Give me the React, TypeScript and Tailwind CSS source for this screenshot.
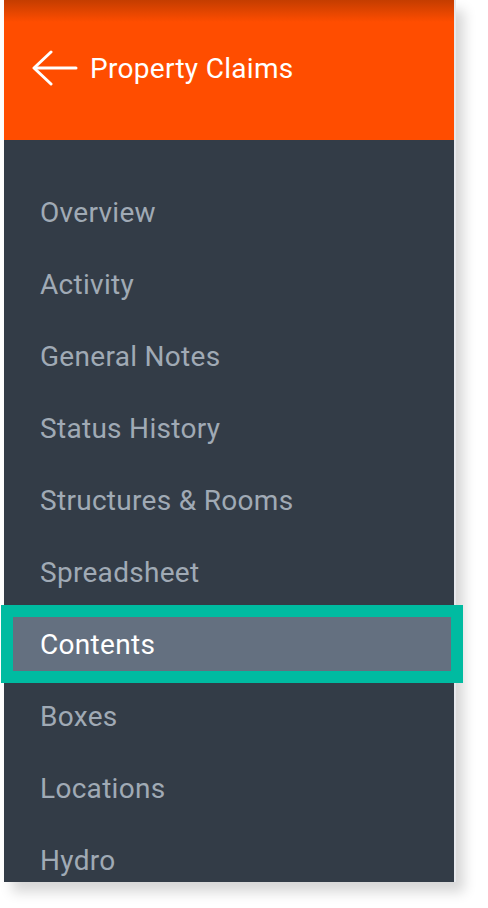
import React from 'react'

const items = [
  'Overview',
  'Activity',
  'General Notes',
  'Status History',
  'Structures & Rooms',
  'Spreadsheet',
  'Contents',
  'Boxes',
  'Locations',
  'Hydro',
]

function App() {
  return (
    <div className="w-[488px] h-[908px] bg-white overflow-hidden" style={{ fontFamily: 'Roboto, "Noto Sans", sans-serif' }}>
      <div className="relative ml-[4px] w-[452px] h-[882px] overflow-hidden bg-[#333c47] border-r-2 border-[#e6e8ec] shadow-[8px_10px_12px_rgba(0,0,0,0.16)]">
        {/* Header */}
        <div className="relative h-[140px] bg-[#ff4d00] flex items-center pl-[28px] gap-[12px] pb-[2px]">
          <div className="absolute inset-x-0 top-0 h-[22px] bg-gradient-to-b from-[#c43d00] to-[#ff4d00]" />
          <svg className="relative" width="46" height="40" viewBox="0 0 46 40" fill="none" stroke="white" strokeWidth="3" strokeLinecap="round" strokeLinejoin="round">
            <path d="M44 19H3" />
            <path d="M19 3L2 19L19 35" />
          </svg>
          <span className="relative text-white text-[28px] leading-none tracking-[0.3px]">Property Claims</span>
        </div>

        {/* Nav */}
        <div className="pt-[37px]">
          {items.map((label) => {
            const active = label === 'Contents'
            return (
              <div
                key={label}
                className={
                  active
                    ? 'relative h-[72px] flex items-center pl-[36px] bg-[#647080] text-white text-[28px] tracking-[0.3px]'
                    : 'relative h-[72px] flex items-center pl-[36px] text-[#a0aab5] text-[28px] tracking-[0.3px]'
                }
              >
                <span className="relative z-10">{label}</span>
              </div>
            )
          })}
        </div>
      </div>
      {/* highlight outline drawn over the Contents row */}
      <div className="absolute left-[1px] top-[605px] w-[462px] h-[78px] border-[12px] border-[#00bba1]" />
    </div>
  )
}

export default App
